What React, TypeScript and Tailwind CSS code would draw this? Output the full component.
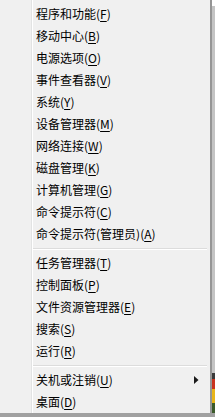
import React from "react";

type Item = { label: string; key: string; suffix?: string; sub?: boolean };

const groups: Item[][] = [
  [
    { label: "程序和功能", key: "F" },
    { label: "移动中心", key: "B" },
    { label: "电源选项", key: "O" },
    { label: "事件查看器", key: "V" },
    { label: "系统", key: "Y" },
    { label: "设备管理器", key: "M" },
    { label: "网络连接", key: "W" },
    { label: "磁盘管理", key: "K" },
    { label: "计算机管理", key: "G" },
    { label: "命令提示符", key: "C" },
    { label: "命令提示符(管理员)", key: "A" },
  ],
  [
    { label: "任务管理器", key: "T" },
    { label: "控制面板", key: "P" },
    { label: "文件资源管理器", key: "E" },
    { label: "搜索", key: "S" },
    { label: "运行", key: "R" },
  ],
  [
    { label: "关机或注销", key: "U", sub: true },
    { label: "桌面", key: "D" },
  ],
];

function MenuItem({ item }: { item: Item }) {
  return (
    <div className="h-[22px] flex items-center pl-[3px] pr-[11px] text-[12px] leading-none text-black">
      <span>
        {item.label}(<span className="underline underline-offset-2">{item.key}</span>)
      </span>
      {item.sub && (
        <svg className="ml-auto" width="5" height="8" viewBox="0 0 5 8">
          <path d="M0 0 L4.5 4 L0 8 Z" fill="#1a1a1a" />
        </svg>
      )}
    </div>
  );
}

function Separator() {
  return (
    <div className="h-[7px] flex flex-col justify-center pr-[3px]">
      <div className="h-px bg-[#dcdcdc]" />
      <div className="h-px bg-white" />
    </div>
  );
}

export default function App() {
  return (
    <div
      className="w-[215px] h-[417px] flex flex-col overflow-hidden bg-[#a0a0a0]"
      style={{ fontFamily: '"Noto Sans CJK SC", "Noto Sans", sans-serif' }}
    >
      <div className="flex h-[413px]">
        {/* menu body */}
        <div className="w-[212px] flex bg-[#f0f0f0] border-r-2 border-[#959595]">
          <div className="w-[31px]" />
          <div className="w-px bg-[#e2e3e3]" />
          <div className="w-px bg-white" />
          <div className="flex-1 pt-[3px]">
            {groups.map((group, gi) => (
              <div key={gi}>
                {gi > 0 && <Separator />}
                {group.map((item) => (
                  <MenuItem key={item.label} item={item} />
                ))}
              </div>
            ))}
          </div>
        </div>
        {/* shadow / desktop strip */}
        <div className="flex-1 flex flex-col">
          <div className="h-[6px] bg-white" />
          <div className="flex-1 bg-[#c4c4c4]" />
          <div className="h-[6px] bg-[#3a3a3a]" />
          <div className="h-[10px] bg-[#c8321e]" />
          <div className="h-[14px] bg-[#e8b418]" />
          <div className="h-[10px] bg-[#3c5a2a]" />
        </div>
      </div>
    </div>
  );
}
